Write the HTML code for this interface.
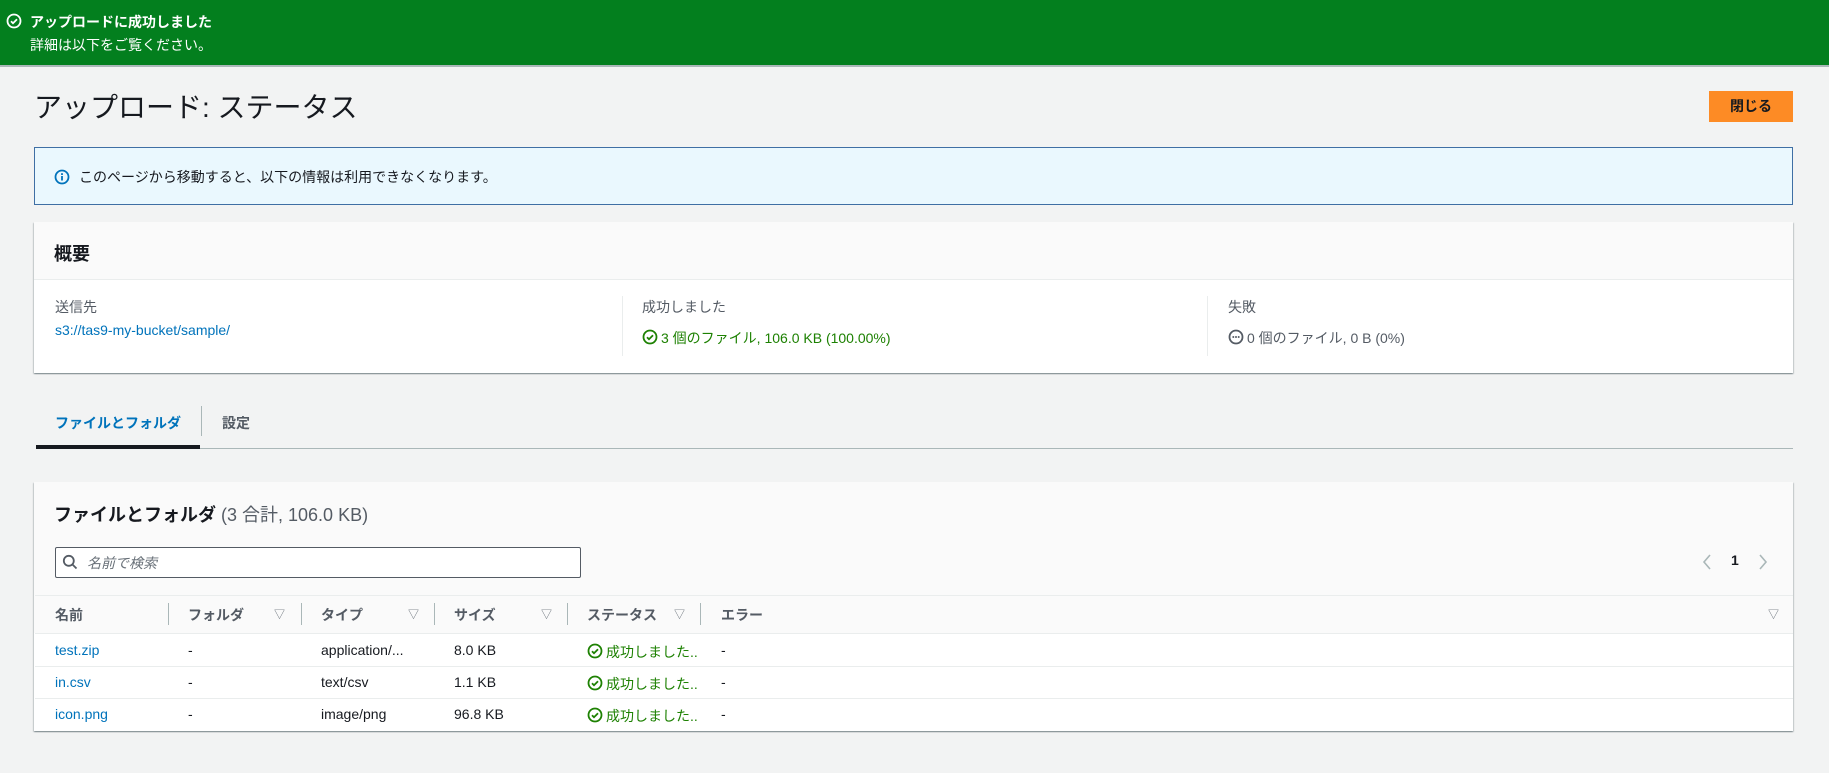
<!DOCTYPE html><html><head><meta charset="utf-8"><style>
*{box-sizing:border-box;margin:0;padding:0}
body{width:1829px;height:773px;background:#f2f3f3;font-family:"Liberation Sans","Noto Sans CJK JP",sans-serif;font-size:14px;color:#16191f;position:relative;overflow:hidden}
.a{position:absolute;white-space:nowrap}
.banner{left:0;top:0;width:1829px;height:67px;background:#037f1e;border-bottom:2px solid #aab7b8;color:#fff}
.card{background:#fff;box-shadow:0 1px 1px rgba(0,28,36,.3),1px 1px 1px rgba(0,28,36,.15),-1px 1px 1px rgba(0,28,36,.15)}
.link{color:#0073bb}
.ok{color:#1d8102}
.gray{color:#545b64}
.th{font-weight:bold;color:#545b64;top:605px}
.vd{background:#aab7b8;width:1px;height:22px;top:603px}
.tri{top:606px;color:#687078;font-size:11px}
.hr{left:35px;width:1758px;height:1px;background:#eaeded}
</style></head><body>
<div class="a banner">
<svg class="a" style="left:6px;top:13px" width="16" height="16" viewBox="0 0 16 16"><circle cx="8" cy="8" r="6.5" fill="none" stroke="#fff" stroke-width="1.8"/><path d="M5 8.2l2 2 4-4" fill="none" stroke="#fff" stroke-width="1.8"/></svg>
<div class="a" style="left:30px;top:12px;font-weight:bold">アップロードに成功しました</div>
<div class="a" style="left:30px;top:35px">詳細は以下をご覧ください。</div>
</div>
<div class="a" style="left:34px;top:86px;font-size:28px">アップロード: ステータス</div>
<div class="a" style="left:1709px;top:91px;width:84px;height:31px;background:#ff9900;background:#fd8b25;font-weight:bold;text-align:center;line-height:31px">閉じる</div>
<div class="a" style="left:34px;top:147px;width:1759px;height:58px;background:#f1faff;background:#eaf8fe;border:1px solid #3f6fa4"></div>
<svg class="a" style="left:54px;top:169px" width="16" height="16" viewBox="0 0 16 16"><circle cx="8" cy="8" r="6.5" fill="none" stroke="#0073bb" stroke-width="1.8"/><rect x="7.1" y="7" width="1.8" height="4.5" fill="#0073bb"/><rect x="7.1" y="4.2" width="1.8" height="1.8" fill="#0073bb"/></svg>
<div class="a" style="left:79px;top:167px">このページから移動すると、以下の情報は利用できなくなります。</div>
<div class="a card" style="left:34px;top:222px;width:1759px;height:151px"></div>
<div class="a" style="left:34px;top:222px;width:1759px;height:58px;background:#fafafa;border-bottom:1px solid #eaeded"></div>
<div class="a" style="left:54px;top:240px;font-size:18px;font-weight:bold">概要</div>
<div class="a gray" style="left:55px;top:297px">送信先</div>
<div class="a link" style="left:55px;top:322px">s3://tas9-my-bucket/sample/</div>
<div class="a" style="left:622px;top:296px;width:1px;height:60px;background:#eaeded"></div>
<div class="a gray" style="left:642px;top:297px">成功しました</div>
<svg class="a" style="left:642px;top:329px" width="16" height="16" viewBox="0 0 16 16"><circle cx="8" cy="8" r="6.5" fill="none" stroke="#1d8102" stroke-width="1.8"/><path d="M5 8.2l2 2 4-4" fill="none" stroke="#1d8102" stroke-width="1.8"/></svg>
<div class="a ok" style="left:661px;top:328px">3 個のファイル, 106.0 KB (100.00%)</div>
<div class="a" style="left:1207px;top:296px;width:1px;height:60px;background:#eaeded"></div>
<div class="a gray" style="left:1228px;top:297px">失敗</div>
<svg class="a" style="left:1228px;top:329px" width="16" height="16" viewBox="0 0 16 16"><circle cx="8" cy="8" r="6.5" fill="none" stroke="#545b64" stroke-width="1.8"/><circle cx="5.3" cy="8" r="1" fill="#545b64"/><circle cx="8" cy="8" r="1" fill="#545b64"/><circle cx="10.7" cy="8" r="1" fill="#545b64"/></svg>
<div class="a gray" style="left:1247px;top:328px">0 個のファイル, 0 B (0%)</div>
<div class="a" style="left:36px;top:448px;width:1757px;height:1px;background:#aab7b8"></div>
<div class="a" style="left:36px;top:445px;width:164px;height:4px;background:#16191f"></div>
<div class="a link" style="left:55px;top:413px;font-weight:bold;color:#0073bb">ファイルとフォルダ</div>
<div class="a" style="left:201px;top:406px;width:1px;height:30px;background:#aab7b8"></div>
<div class="a" style="left:222px;top:413px;font-weight:bold;color:#545b64">設定</div>
<div class="a card" style="left:34px;top:482px;width:1759px;height:249px"></div>
<div class="a" style="left:34px;top:482px;width:1759px;height:151px;background:#fafafa"></div>
<div class="a" style="left:54px;top:501px;font-size:18px;font-weight:bold">ファイルとフォルダ <span style="font-weight:normal;color:#545b64">(3 合計, 106.0 KB)</span></div>
<div class="a" style="left:55px;top:547px;width:526px;height:31px;background:#fff;border:1px solid #545b64;border-radius:2px"></div>
<svg class="a" style="left:62px;top:554px" width="16" height="16" viewBox="0 0 16 16"><circle cx="6.8" cy="6.8" r="5" fill="none" stroke="#545b64" stroke-width="1.8"/><path d="M10.5 10.5l4 4" stroke="#545b64" stroke-width="1.8"/></svg>
<div class="a" style="left:87px;top:553px;font-style:italic;color:#687078">名前で検索</div>
<svg class="a" style="left:1701px;top:553px" width="12" height="18" viewBox="0 0 12 18"><path d="M9 2L3 9l6 7" fill="none" stroke="#aab7b8" stroke-width="1.6"/></svg>
<div class="a" style="left:1731px;top:552px;font-weight:bold">1</div>
<svg class="a" style="left:1757px;top:553px" width="12" height="18" viewBox="0 0 12 18"><path d="M3 2l6 7-6 7" fill="none" stroke="#aab7b8" stroke-width="1.6"/></svg>
<div class="a hr" style="top:595px"></div>
<div class="a hr" style="top:633px"></div>
<div class="a th" style="left:55px">名前</div>
<div class="a vd" style="left:168px"></div>
<div class="a th" style="left:188px">フォルダ</div><div class="a tri" style="left:274px">▽</div>
<div class="a vd" style="left:301px"></div>
<div class="a th" style="left:321px">タイプ</div><div class="a tri" style="left:408px">▽</div>
<div class="a vd" style="left:434px"></div>
<div class="a th" style="left:454px">サイズ</div><div class="a tri" style="left:541px">▽</div>
<div class="a vd" style="left:567px"></div>
<div class="a th" style="left:587px">ステータス</div><div class="a tri" style="left:674px">▽</div>
<div class="a vd" style="left:700px"></div>
<div class="a th" style="left:721px">エラー</div><div class="a tri" style="left:1768px">▽</div>
<div class="a hr" style="top:666px"></div>
<div class="a hr" style="top:698px"></div>
<div class="a link" style="left:55px;top:642px">test.zip</div><div class="a" style="left:188px;top:642px">-</div><div class="a" style="left:321px;top:642px">application/...</div><div class="a" style="left:454px;top:642px">8.0 KB</div>
<div class="a link" style="left:55px;top:674px">in.csv</div><div class="a" style="left:188px;top:674px">-</div><div class="a" style="left:321px;top:674px">text/csv</div><div class="a" style="left:454px;top:674px">1.1 KB</div>
<div class="a link" style="left:55px;top:706px">icon.png</div><div class="a" style="left:188px;top:706px">-</div><div class="a" style="left:321px;top:706px">image/png</div><div class="a" style="left:454px;top:706px">96.8 KB</div>
<svg class="a" style="left:587px;top:643px" width="16" height="16" viewBox="0 0 16 16"><circle cx="8" cy="8" r="6.5" fill="none" stroke="#1d8102" stroke-width="1.8"/><path d="M5 8.2l2 2 4-4" fill="none" stroke="#1d8102" stroke-width="1.8"/></svg>
<svg class="a" style="left:587px;top:675px" width="16" height="16" viewBox="0 0 16 16"><circle cx="8" cy="8" r="6.5" fill="none" stroke="#1d8102" stroke-width="1.8"/><path d="M5 8.2l2 2 4-4" fill="none" stroke="#1d8102" stroke-width="1.8"/></svg>
<svg class="a" style="left:587px;top:707px" width="16" height="16" viewBox="0 0 16 16"><circle cx="8" cy="8" r="6.5" fill="none" stroke="#1d8102" stroke-width="1.8"/><path d="M5 8.2l2 2 4-4" fill="none" stroke="#1d8102" stroke-width="1.8"/></svg>
<div class="a ok" style="left:606px;top:642px">成功しました..</div><div class="a" style="left:721px;top:642px">-</div>
<div class="a ok" style="left:606px;top:674px">成功しました..</div><div class="a" style="left:721px;top:674px">-</div>
<div class="a ok" style="left:606px;top:706px">成功しました..</div><div class="a" style="left:721px;top:706px">-</div>
</body></html>
